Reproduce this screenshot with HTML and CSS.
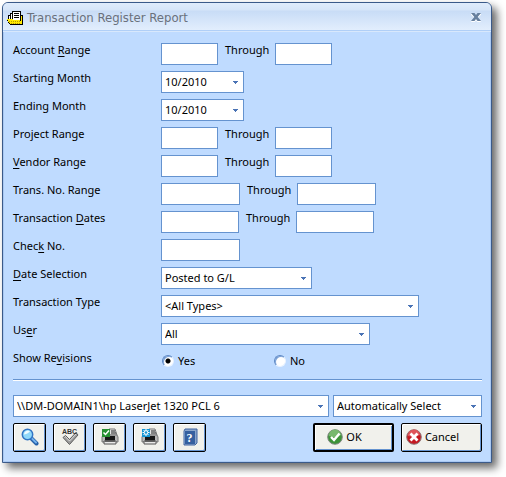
FILE: index.html
```html
<!DOCTYPE html>
<html lang="en">
<head>
    <meta charset="UTF-8">
    <meta name="viewport" content="width=device-width, initial-scale=1.0">
    <title>Transaction Register Report</title>
    <link rel="stylesheet" href="styles.css">
</head>
<body>
    <form class="dialog">
        <header class="titlebar">
            <svg class="title-icon" width="16" height="14" viewBox="0 0 16 14" shape-rendering="crispEdges">
                <path d="M1 4h2v-2h2v-2h9v9H1z" fill="#000"/>
                <path d="M6 1h7v8H6zM4 3h1v6H4zM2 5h1v4H2z" fill="#fff"/>
                <path d="M7 2.500h5M7 4.500h5M7 6.500h5" stroke="#000"/>
                <path d="M0 8h5l1 1h8v-5h2v10H3L0 9z" fill="#000"/>
                <path d="M0 8h5l1 1h7l2 4H3z" fill="#ffe900"/>
                <path d="M14 5h1v7h-1z" fill="#ffe900"/>
                <path d="M2 10.500h11M4 12.500h10" stroke="#b89b00" stroke-dasharray="1 1"/>
            </svg>
            <h1>Transaction Register Report</h1>
            <button type="button" class="close" aria-label="Close">
                <svg width="10" height="9" viewBox="0 0 10 9">
                    <path d="M0 0h3l2 2.500L7 0h3v1L6.500 4.500 10 8v1H7L5 6.500 3 9H0V8l3.500-3.500L0 1z" fill="#fff" transform="translate(0 .8)"/>
                    <path d="M0 0h3.500L5 2 6.500 0H10L6.700 4 10 8H6.500L5 6 3.500 8H0l3.300-4z" fill="#67809f"/>
                </svg>
            </button>
        </header>

        <main class="content">
            <div class="row">
                <label for="account-from">Account <u>R</u>ange</label>
                <div class="fields">
                    <input type="text" class="short" id="account-from">
                    <label class="through" for="account-to">Through</label>
                    <input type="text" class="short" id="account-to">
                </div>
            </div>
            <div class="row">
                <label for="start-month">Starting Month</label>
                <select class="month" id="start-month"><option>10/2010</option></select>
            </div>
            <div class="row">
                <label for="end-month">Ending Month</label>
                <select class="month" id="end-month"><option>10/2010</option></select>
            </div>
            <div class="row">
                <label for="project-from">Project Range</label>
                <div class="fields">
                    <input type="text" class="short" id="project-from">
                    <label class="through" for="project-to">Through</label>
                    <input type="text" class="short" id="project-to">
                </div>
            </div>
            <div class="row">
                <label for="vendor-from"><u>V</u>endor Range</label>
                <div class="fields">
                    <input type="text" class="short" id="vendor-from">
                    <label class="through" for="vendor-to">Through</label>
                    <input type="text" class="short" id="vendor-to">
                </div>
            </div>
            <div class="row">
                <label for="trans-from">Trans. No. Range</label>
                <div class="fields">
                    <input type="text" class="number" id="trans-from">
                    <label class="through" for="trans-to">Through</label>
                    <input type="text" class="number" id="trans-to">
                </div>
            </div>
            <div class="row">
                <label for="date-from">Transaction <u>D</u>ates</label>
                <div class="fields">
                    <input type="text" class="date" id="date-from">
                    <label class="through" for="date-to">Through</label>
                    <input type="text" class="date" id="date-to">
                </div>
            </div>
            <div class="row">
                <label for="check-no">Chec<u>k</u> No.</label>
                <input type="text" class="number" id="check-no">
            </div>
            <div class="row">
                <label for="date-selection"><u>D</u>ate Selection</label>
                <select class="posted" id="date-selection"><option>Posted to G/L</option></select>
            </div>
            <div class="row">
                <label for="trans-type">Transaction Type</label>
                <select class="type" id="trans-type"><option>&lt;All Types&gt;</option></select>
            </div>
            <div class="row">
                <label for="user">Us<u>e</u>r</label>
                <select class="user" id="user"><option>All</option></select>
            </div>
            <div class="row" role="radiogroup" aria-labelledby="revisions">
                <span id="revisions">Show Re<u>v</u>isions</span>
                <div class="radios">
                    <label><input type="radio" name="revisions" checked>Yes</label>
                    <label><input type="radio" name="revisions">No</label>
                </div>
            </div>

            <hr>

            <div class="printer">
                <select class="device" aria-label="Printer"><option>\\DM-DOMAIN1\hp LaserJet 1320 PCL 6</option></select>
                <select class="tray" aria-label="Paper source"><option>Automatically Select</option></select>
            </div>

            <div class="actions">
                <button type="button" class="tool" aria-label="Preview">
                    <svg width="18" height="18" viewBox="0 0 18 18">
                        <path d="M10 10l5.500 5.500" stroke="#245fa8" stroke-width="4" stroke-linecap="round"/>
                        <path d="M10.500 10l4.500 4.500" stroke="#74b2ee" stroke-width="2" stroke-linecap="round"/>
                        <circle cx="6.500" cy="6.500" r="5.200" fill="#8fd8fa" stroke="#3275c4" stroke-width="1.500"/>
                        <path d="M3 6.500a4 4 0 0 1 6-3.500C8 5 6 6 3 6.500z" fill="#effbff"/>
                    </svg>
                </button>
                <button type="button" class="tool" aria-label="Spelling">
                    <svg width="18" height="18" viewBox="0 0 18 18">
                        <path d="M2 9.500l2.500-2 4 4L15 4.500l2 2.500-8.500 9.500z" fill="#9c9c9c" stroke="#5e5e5e"/>
                        <path d="M3.500 9.500l1-1 4 4.500 6.500-7" stroke="#ddd" fill="none"/>
                        <text class="abc" x="1" y="6">ABC</text>
                    </svg>
                </button>
                <button type="button" class="tool" aria-label="Print">
                    <svg width="18" height="18" viewBox="0 0 18 18">
                        <path d="M8 1h6l2 6H8z" fill="#e4e4e4" stroke="#777"/>
                        <path d="M10 3h4M10 5h5" stroke="#222"/>
                        <path d="M2 7h14l1 2v5H1V9z" fill="#b9b9b9" stroke="#777"/>
                        <path d="M4 8h10v4H4z" fill="#161616"/>
                        <path d="M3 13h12v3H3z" fill="#e9e9e9" stroke="#555"/>
                        <path d="M4 13h10" stroke="#222"/>
                        <path d="M1 1h8v8H1z" fill="#279032"/>
                        <path d="M2.500 4.500l2 2L8 2.500" stroke="#fff" stroke-width="1.500" fill="none"/>
                    </svg>
                </button>
                <button type="button" class="tool" aria-label="Printer setup">
                    <svg width="18" height="18" viewBox="0 0 18 18">
                        <path d="M8 1h6l2 6H8z" fill="#e4e4e4" stroke="#777"/>
                        <path d="M10 3h4M10 5h5" stroke="#222"/>
                        <path d="M2 7h14l1 2v5H1V9z" fill="#b9b9b9" stroke="#777"/>
                        <path d="M4 8h10v4H4z" fill="#161616"/>
                        <path d="M3 13h12v3H3z" fill="#e9e9e9" stroke="#555"/>
                        <path d="M4 13h10" stroke="#222"/>
                        <path d="M1 1h8v8H1z" fill="#1495d4"/>
                        <path d="M5 1v7M1.500 4.500h7M2.500 2l5 5M7.500 2l-5 5" stroke="#fff"/>
                        <circle cx="5" cy="4.500" r="1.800" fill="#1495d4" stroke="#fff"/>
                    </svg>
                </button>
                <button type="button" class="tool" aria-label="Help">
                    <svg width="18" height="18" viewBox="0 0 18 18">
                        <path d="M4 1h12v14l-2 2H3V3z" fill="#8ba6cc" stroke="#3f63a0"/>
                        <path d="M3 3h11v13H3z" fill="#355f9f"/>
                        <path d="M3.500 3v13" stroke="#6f91c2"/>
                        <text class="question" x="8.500" y="14">?</text>
                    </svg>
                </button>
                <button type="submit" class="command default">
                    <svg width="16" height="16" viewBox="0 0 16 16">
                        <circle cx="8" cy="8" r="7.300" fill="#3c9338" stroke="#818681"/>
                        <path d="M2 7a6 6 0 0 1 12-1C10 9 6 9 2 7z" fill="#78b86e"/>
                        <path d="M4 8l3 3 5.500-6.500" fill="none" stroke="#fff" stroke-width="2.400"/>
                    </svg>
                    OK
                </button>
                <button type="button" class="command">
                    <svg width="16" height="16" viewBox="0 0 16 16">
                        <circle cx="8" cy="8" r="7.300" fill="#c51820" stroke="#8c7777"/>
                        <path d="M2 7a6 6 0 0 1 12-1C10 8 6 8 2 7z" fill="#df555a"/>
                        <path d="M4.500 4.500l7 7M11.500 4.500l-7 7" stroke="#fff" stroke-width="2.800"/>
                    </svg>
                    Cancel
                </button>
            </div>
        </main>
    </form>
</body>
</html>
```
FILE: styles.css
```css
* {
    box-sizing: border-box;
}

body {
    margin: 0;
    padding: 2px 14px 14px 2px;
    background: #fff;
    font-family: "Noto Sans", sans-serif;
    font-size: 11px;
    line-height: 14px;
    color: #000;
}

.dialog {
    border: 1px solid #3b5a89;
    border-radius: 6px 6px 0 0;
    background: #bfdbff;
    box-shadow: inset -1px -1px #a9c8f2, inset 1px 0 #a9c8f2, 5px 5px 8px rgba(0, 0, 0, 0.6);
}

.titlebar {
    display: flex;
    align-items: center;
    height: 28px;
    padding: 2px 10px 0 4px;
    border-bottom: 1px solid #b0cff7;
    border-radius: 5px 5px 0 0;
    background: linear-gradient(#e0ecfb 0, #d6e5f8 7px, #c8dcf6 8px, #e2eefd 100%);
}

.titlebar h1 {
    flex: 1;
    margin: 0 0 0 4px;
    font-family: "DejaVu Sans Condensed", "DejaVu Sans", sans-serif;
    font-size: 13px;
    font-weight: normal;
    color: #6a717c;
}

.close {
    display: flex;
    padding: 0;
    border: 0;
    background: none;
}

.content {
    padding: 11px 9px 10px 10px;
    border-top: 1px solid #d8e8fc;
}

.row {
    display: grid;
    grid-template-columns: 148px 1fr;
    align-items: start;
    justify-items: start;
    height: 22px;
    margin-bottom: 6px;
}

.fields {
    display: flex;
    gap: 7px;
}

.through {
    width: 43px;
    white-space: nowrap;
}

u {
    text-underline-offset: 2px;
}

input[type="text"],
select {
    height: 22px;
    margin: 0;
    border: 1px solid #6593cf;
    border-radius: 0;
    background-color: #fff;
    font: inherit;
    color: #000;
}

select {
    appearance: none;
    padding: 0 16px 0 3px;
    background-image: url("data:image/svg+xml,%3Csvg xmlns='http://www.w3.org/2000/svg' width='5' height='3'%3E%3Cpath d='M0 0h5v1H4v1H3v1H2V2H1V1H0z' fill='%234a73b5'/%3E%3C/svg%3E");
    background-repeat: no-repeat;
    background-position: right 5px center;
}

.short {
    width: 57px;
}

.number {
    width: 79px;
}

.date {
    width: 78px;
}

.month {
    width: 83px;
}

.posted {
    width: 151px;
}

.type {
    width: 258px;
}

.user {
    width: 209px;
}

.radios {
    display: grid;
    grid-template-columns: 112px 1fr;
    padding-top: 3px;
}

.radios label {
    display: flex;
    align-items: center;
    gap: 4px;
}

input[type="radio"] {
    appearance: none;
    width: 12px;
    height: 12px;
    margin: 0 0 0 1px;
    border: 1px solid;
    border-color: #5c87c4 #e8f2ff #e8f2ff #5c87c4;
    border-radius: 50%;
    background: #fff;
    box-shadow: inset 1px 1px #7ba2d8;
}

input[type="radio"]:checked {
    background: radial-gradient(circle, #000 0, #000 2px, #fff 3px);
}

hr {
    height: 2px;
    margin: 0 0 14px;
    border: 0;
    border-top: 1px solid #6593cf;
    background: #fff;
}

.printer {
    display: flex;
    gap: 4px;
    margin-bottom: 6px;
}

.device {
    flex: 1;
}

.tray {
    width: 149px;
}

.actions {
    display: flex;
    gap: 7px;
}

.tool,
.command {
    display: flex;
    align-items: center;
    justify-content: center;
    height: 29px;
    padding: 0 0 1px;
    border: 1px solid #000;
    border-radius: 2px;
    background: #f1f1ec;
    box-shadow: inset 1px 1px #fff, inset -1px -1px #6593cf;
    font: inherit;
    color: #000;
}

.tool {
    width: 33px;
}

.command {
    gap: 3px;
    width: 81px;
    padding-right: 18px;
}

.default {
    margin-left: auto;
    border-width: 2px;
}

.abc {
    font: bold 7px "Liberation Sans", sans-serif;
    fill: #333;
}

.question {
    font: bold 12px "Liberation Serif", serif;
    fill: #fff;
    text-anchor: middle;
}
```
